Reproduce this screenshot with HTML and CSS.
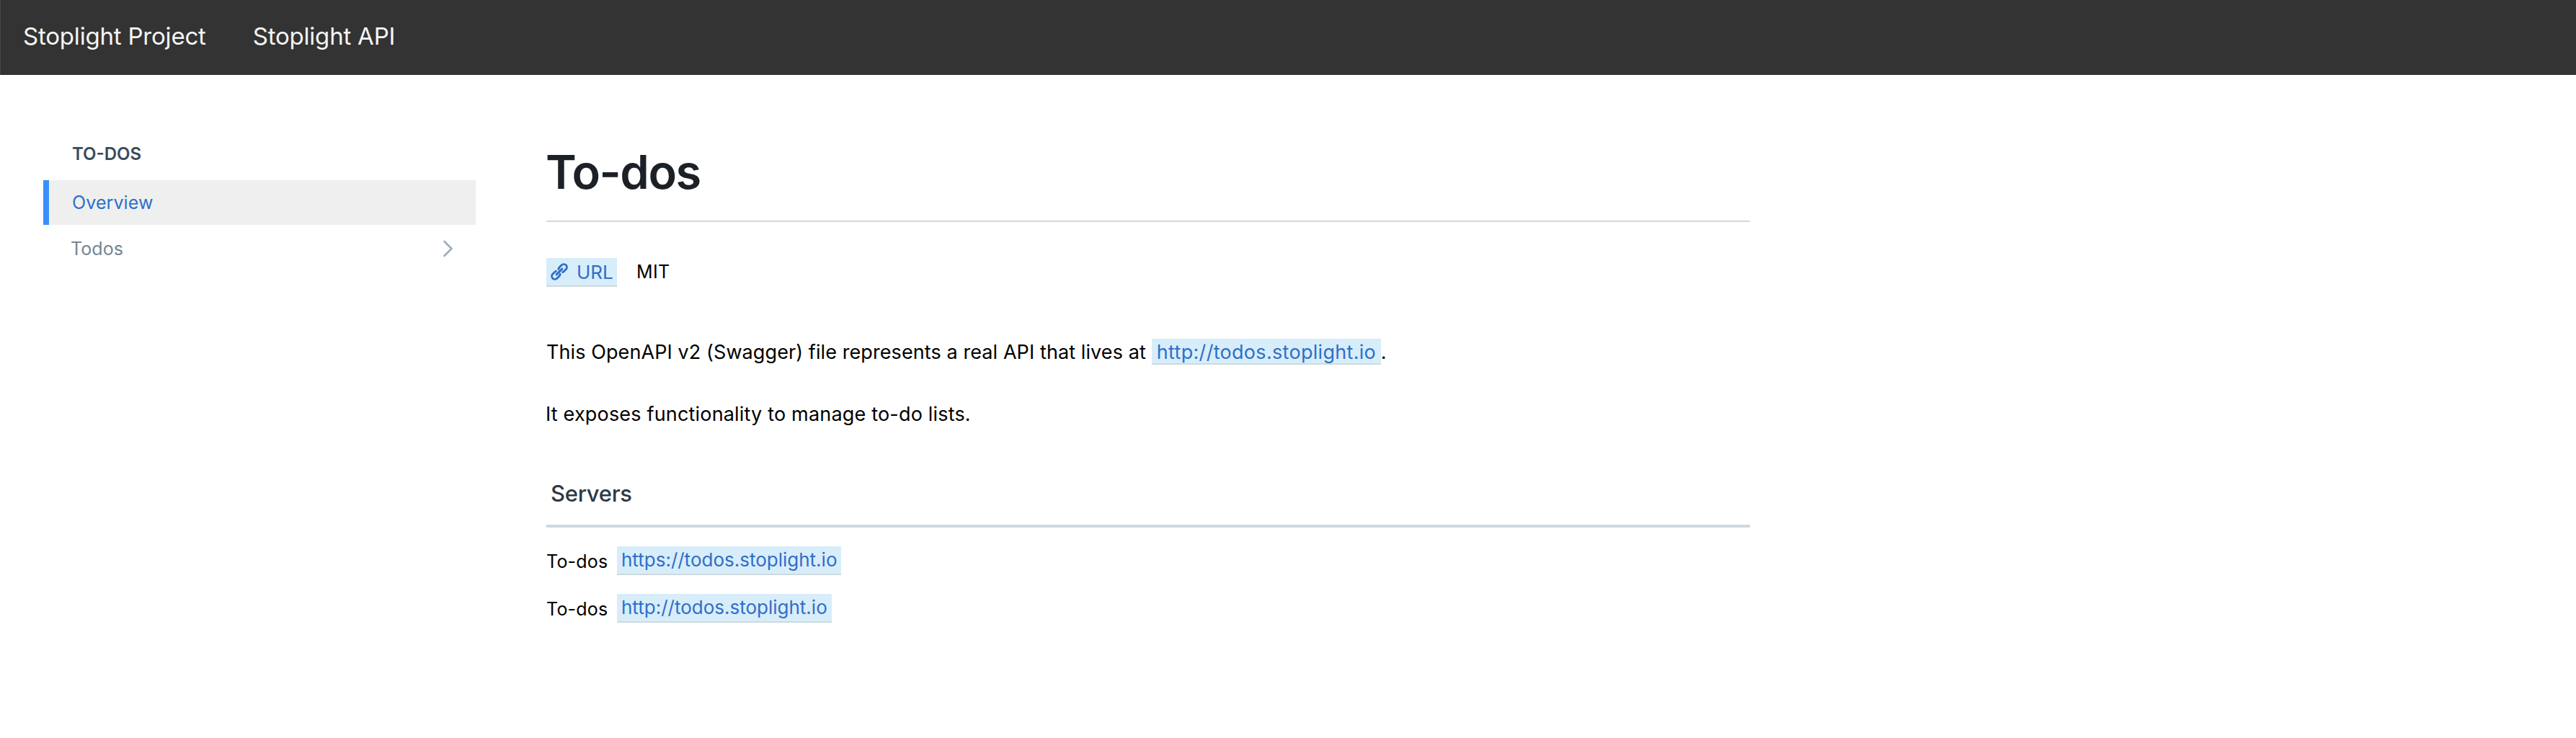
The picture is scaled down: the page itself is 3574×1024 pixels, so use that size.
FILE: index.html
```
<!DOCTYPE html>
<html lang="en">
<head>
<meta charset="utf-8">
<title>To-dos</title>
<link rel="stylesheet" href="styles.css">
</head>
<body>
<header class="topbar">
  <a class="brand">Stoplight Project</a>
  <a class="brand">Stoplight API</a>
</header>
<div class="layout">
  <nav class="sidebar">
    <div class="group">TO-DOS</div>
    <a class="item active">Overview</a>
    <a class="item parent"><span>Todos</span>
      <svg class="chevron" width="16" height="26" viewBox="0 0 16 26" fill="none" stroke="#a2adb9" stroke-width="2.7" stroke-linecap="round" stroke-linejoin="round"><path d="M2.5 3 12.5 13 2.5 23"/></svg>
    </a>
  </nav>
  <main class="content">
    <h1 class="title">To-dos</h1>
    <div class="license">
      <a class="link url">
        <svg width="24" height="24" viewBox="0 0 24 24" fill="none" stroke="#2f6fca" stroke-width="2.9" stroke-linecap="round"><g transform="translate(12 12) rotate(-45)"><path d="M1.6-3.2Q2.8-4.2 4.5-4.2H8.8A4.2 4.2 0 0 1 8.8 4.2H4.5Q3.6 4.2 2.8 3.8"/><path d="M-1.6 3.2Q-2.8 4.2-4.5 4.2H-8.8A4.2 4.2 0 0 1-8.8-4.2H-4.5Q-3.6-4.2-2.8-3.8"/><path d="M-5.5 0H5.5"/></g></svg>
        <span>URL</span>
      </a>
      <span class="mit">MIT</span>
    </div>
    <p class="text first"><span>This OpenAPI v2 (Swagger) file represents a real API that lives at</span><a class="link">http://todos.stoplight.io</a><span>.</span></p>
    <p class="text second">It exposes functionality to manage to-do lists.</p>
    <h2 class="section">Servers</h2>
    <div class="server"><span class="name">To-dos</span><a class="link">https://todos.stoplight.io</a></div>
    <div class="server"><span class="name">To-dos</span><a class="link">http://todos.stoplight.io</a></div>
  </main>
</div>
</body>
</html>
```
FILE: styles.css
```
* { box-sizing: border-box; }
body {
  margin: 0;
  min-height: 1024px;
  background: #fff;
  color: #000;
  font-family: Inter, "Liberation Sans", sans-serif;
}
.topbar {
  display: flex;
  gap: 65px;
  height: 104px;
  padding-left: 31px;
  background: #333;
  border-left: 1px solid #484848;
}
.brand {
  color: #f5f5f5;
  font-size: 33px;
  line-height: 100px;
  letter-spacing: -0.2px;
}
.layout { display: flex; }
.sidebar {
  width: 600px;
  margin-left: 60px;
  padding-top: 90px;
}
.group {
  height: 56px;
  padding-left: 40px;
  color: #394b59;
  font-size: 24px;
  font-weight: 600;
  line-height: 40px;
}
.item {
  display: flex;
  align-items: center;
  justify-content: space-between;
  height: 62px;
  font-size: 25px;
  letter-spacing: 0.1px;
}
.active {
  padding-left: 32px;
  background: #efefef;
  border-left: 8px solid #3b8ff9;
  color: #2f6fca;
}
.parent {
  height: 66px;
  padding: 0 30px 0 38px;
  color: #738694;
}
.content {
  width: 1670px;
  margin-left: 98px;
  padding-top: 84px;
}
.title {
  height: 120px;
  margin: 0;
  border-bottom: 2px solid #ced9e0;
  color: #1c2127;
  font-size: 65px;
  font-weight: 600;
  line-height: 102px;
  letter-spacing: -1.45px;
  text-indent: -1px;
}
.link {
  background: #d8edfa;
  border-bottom: 2px solid #ced9e0;
  color: #2f6fca;
}
.license {
  display: flex;
  gap: 27px;
  height: 40px;
  margin-top: 50px;
  font-size: 26px;
  line-height: 37px;
}
.url {
  display: flex;
  align-items: center;
  gap: 12px;
  width: 98px;
  padding-left: 6px;
}
.mit {
  font-size: 25px;
  line-height: 38px;
  letter-spacing: 0.3px;
}
.text {
  display: flex;
  height: 36px;
  margin: 0;
  font-size: 27px;
  line-height: 37px;
  letter-spacing: 0.09px;
}
.text .link {
  width: 318px;
  margin-left: 8px;
  padding-left: 7px;
  letter-spacing: 0.3px;
}
.first { margin-top: 72px; }
.second {
  margin-top: 50px;
  letter-spacing: 0.18px;
  text-indent: -1px;
}
.section {
  height: 90px;
  margin: 50px 0 26px;
  padding-left: 6px;
  border-bottom: 4px solid #ced9e0;
  color: #2d3845;
  font-size: 31px;
  font-weight: 500;
  line-height: 85px;
  letter-spacing: -0.3px;
}
.server {
  display: flex;
  height: 40px;
  margin-bottom: 26px;
  font-size: 26px;
  line-height: 38px;
}
.server .link { padding: 0 6px; }
.name {
  width: 98px;
  font-size: 25px;
  line-height: 42px;
  letter-spacing: 0.2px;
}
```
